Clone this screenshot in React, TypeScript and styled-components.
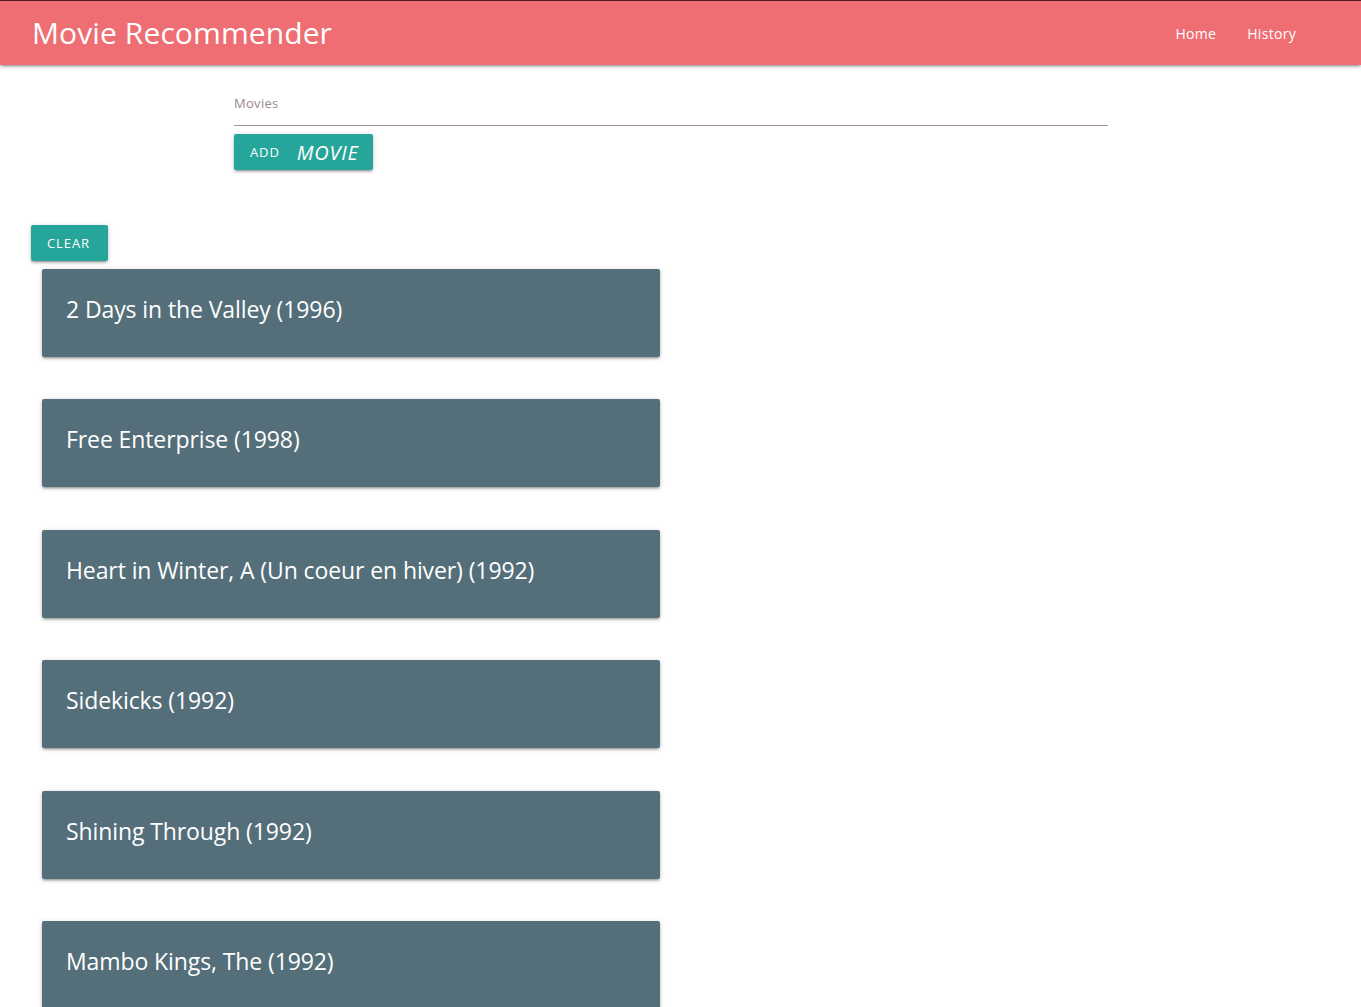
import React from "react";
import styled, { createGlobalStyle } from "styled-components";

const Global = createGlobalStyle`
  html, body { margin: 0; padding: 0; background: #fff; }
  body { font-family: "Open Sans", "Noto Sans", sans-serif; }
  * { box-sizing: border-box; }
`;

const Nav = styled.header`
  height: 65px;
  background: #ee6e73;
  border-top: 1px solid #4a2226;
  display: flex;
  align-items: center;
  justify-content: space-between;
  padding: 0 65px 0 32px;
  box-shadow: 0 2px 2px 0 rgba(0,0,0,0.14), 0 3px 1px -2px rgba(0,0,0,0.12), 0 1px 5px 0 rgba(0,0,0,0.2);
  position: relative;
  z-index: 1;
`;

const Brand = styled.div`
  color: #fff;
  font-size: 30px;
  letter-spacing: 0.1px;
  line-height: 1;
`;

const Links = styled.nav`
  display: flex;
  gap: 31px;
`;

const NavLink = styled.a`
  color: #fff;
  font-size: 14px;
  letter-spacing: 0.3px;
  text-decoration: none;
`;

const Form = styled.section`
  margin: 13px 0 0 234px;
  width: 874px;
  display: flex;
  flex-direction: column;
  align-items: flex-start;
`;

const Field = styled.div`
  width: 100%;
  height: 48px;
  border-bottom: 1px solid #a89292;
  display: flex;
  align-items: center;
  padding-top: 2px;
`;

const Label = styled.label`
  color: #9a8a8a;
  font-size: 13px;
  letter-spacing: 0.3px;
`;

const Button = styled.button`
  height: 36px;
  border: none;
  border-radius: 2px;
  background: #26a69a;
  color: #fff;
  font-family: inherit;
  font-size: 13px;
  letter-spacing: 0.9px;
  text-transform: uppercase;
  padding: 0 16px;
  display: inline-flex;
  align-items: center;
  gap: 17px;
  box-shadow: 0 2px 2px 0 rgba(0,0,0,0.14), 0 3px 1px -2px rgba(0,0,0,0.12), 0 1px 5px 0 rgba(0,0,0,0.2);
  cursor: pointer;
`;

const Em = styled.em`
  font-size: 20px;
  letter-spacing: 0.8px;
`;

const AddButton = styled(Button)`
  margin-top: 8px;
  width: 139px;
`;

const ClearButton = styled(Button)`
  margin: 55px 0 0 31px;
  width: 77px;
`;

const List = styled.div`
  margin: 8px 0 0 42px;
  display: flex;
  flex-direction: column;
  gap: 42.4px;
`;

const Card = styled.div`
  width: 618px;
  height: 88px;
  background: #546e7a;
  color: #fff;
  font-size: 23px;
  letter-spacing: -0.1px;
  padding: 0 24px 8px;
  display: flex;
  align-items: center;
  border-radius: 2px;
  box-shadow: 0 2px 2px 0 rgba(0,0,0,0.14), 0 3px 1px -2px rgba(0,0,0,0.12), 0 1px 5px 0 rgba(0,0,0,0.2);
`;

const movies = [
  "2 Days in the Valley (1996)",
  "Free Enterprise (1998)",
  "Heart in Winter, A (Un coeur en hiver) (1992)",
  "Sidekicks (1992)",
  "Shining Through (1992)",
  "Mambo Kings, The (1992)",
];

export default function App() {
  return (
    <>
      <Global />
      <Nav>
        <Brand>Movie Recommender</Brand>
        <Links>
          <NavLink href="#">Home</NavLink>
          <NavLink href="#">History</NavLink>
        </Links>
      </Nav>
      <Form>
        <Field>
          <Label>Movies</Label>
        </Field>
        <AddButton>
          Add <Em>Movie</Em>
        </AddButton>
      </Form>
      <ClearButton>Clear</ClearButton>
      <List>
        {movies.map((m) => (
          <Card key={m}>{m}</Card>
        ))}
      </List>
    </>
  );
}
